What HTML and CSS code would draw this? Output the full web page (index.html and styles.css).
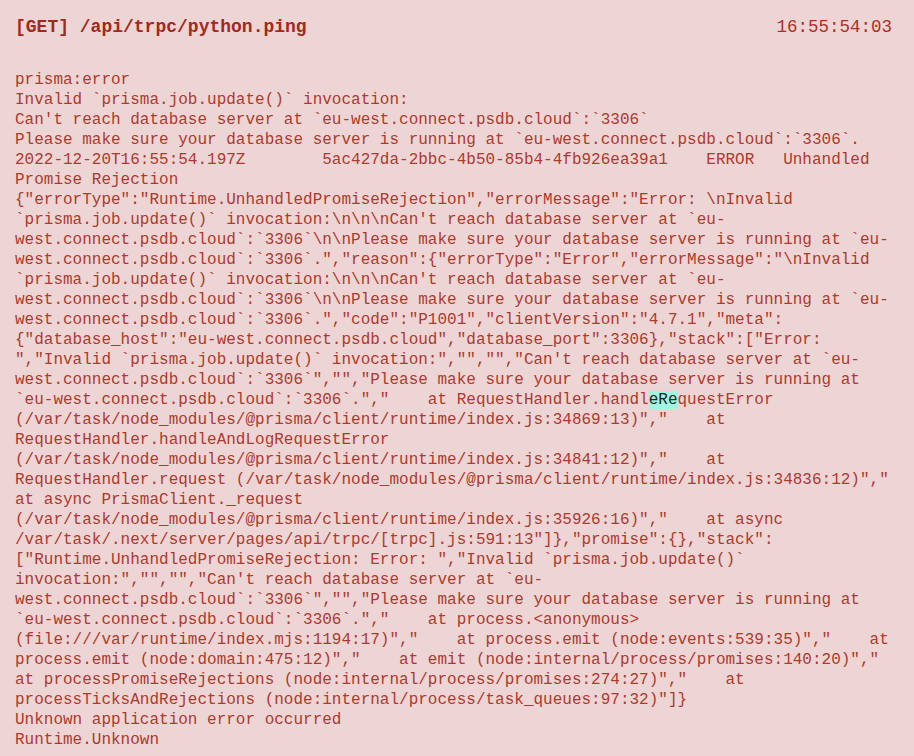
FILE: index.html
```html
<!DOCTYPE html>
<html lang="en">
<head>
<meta charset="UTF-8">
<title>Log entry</title>
<link rel="stylesheet" href="styles.css">
</head>
<body>

<div class="entry">
  <div class="entry-head">
    <span class="route">[GET] /api/trpc/python.ping</span>
    <span class="time">16:55:54:03</span>
  </div>
<pre class="entry-body">prisma:error
Invalid `prisma.job.update()` invocation:
Can't reach database server at `eu-west.connect.psdb.cloud`:`3306`
Please make sure your database server is running at `eu-west.connect.psdb.cloud`:`3306`.
2022-12-20T16:55:54.197Z        5ac427da-2bbc-4b50-85b4-4fb926ea39a1    ERROR   Unhandled
Promise Rejection
{"errorType":"Runtime.UnhandledPromiseRejection","errorMessage":"Error: \nInvalid
`prisma.job.update()` invocation:\n\n\nCan't reach database server at `eu-
west.connect.psdb.cloud`:`3306`\n\nPlease make sure your database server is running at `eu-
west.connect.psdb.cloud`:`3306`.","reason":{"errorType":"Error","errorMessage":"\nInvalid
`prisma.job.update()` invocation:\n\n\nCan't reach database server at `eu-
west.connect.psdb.cloud`:`3306`\n\nPlease make sure your database server is running at `eu-
west.connect.psdb.cloud`:`3306`.","code":"P1001","clientVersion":"4.7.1","meta":
{"database_host":"eu-west.connect.psdb.cloud","database_port":3306},"stack":["Error:
","Invalid `prisma.job.update()` invocation:","","","Can't reach database server at `eu-
west.connect.psdb.cloud`:`3306`","","Please make sure your database server is running at
`eu-west.connect.psdb.cloud`:`3306`.","    at RequestHandler.handl<mark class="hit">eRe</mark>questError
(/var/task/node_modules/@prisma/client/runtime/index.js:34869:13)","    at
RequestHandler.handleAndLogRequestError
(/var/task/node_modules/@prisma/client/runtime/index.js:34841:12)","    at
RequestHandler.request (/var/task/node_modules/@prisma/client/runtime/index.js:34836:12)","
at async PrismaClient._request
(/var/task/node_modules/@prisma/client/runtime/index.js:35926:16)","    at async
/var/task/.next/server/pages/api/trpc/[trpc].js:591:13"]},"promise":{},"stack":
["Runtime.UnhandledPromiseRejection: Error: ","Invalid `prisma.job.update()`
invocation:","","","Can't reach database server at `eu-
west.connect.psdb.cloud`:`3306`","","Please make sure your database server is running at
`eu-west.connect.psdb.cloud`:`3306`.","    at process.&lt;anonymous&gt;
(file:///var/runtime/index.mjs:1194:17)","    at process.emit (node:events:539:35)","    at
process.emit (node:domain:475:12)","    at emit (node:internal/process/promises:140:20)","
at processPromiseRejections (node:internal/process/promises:274:27)","    at
processTicksAndRejections (node:internal/process/task_queues:97:32)"]}
Unknown application error occurred
Runtime.Unknown</pre>
</div>

</body>
</html>
```

FILE: styles.css
```css
body {
  margin: 0;
  padding: 0;
  background-color: #edd5d6;
  color: #ad3a2c;
  font-family: 'Liberation Mono', 'DejaVu Sans Mono', monospace;
}

.entry {
  padding: 15px 22px 6px 15px;
}

.entry-head {
  display: flex;
  justify-content: space-between;
  align-items: center;
  height: 24px;
}

.route {
  font-size: 18px;
  font-weight: bold;
  color: #a3281d;
}

.time {
  font-size: 17.5px;
  color: #ad2f24;
}

.entry-body {
  margin: 31px 0 0;
  font-family: inherit;
  font-size: 16px;
  line-height: 20px;
  white-space: pre;
}

.hit {
  background-color: #9ff5df;
  color: #1c2a25;
}
```
